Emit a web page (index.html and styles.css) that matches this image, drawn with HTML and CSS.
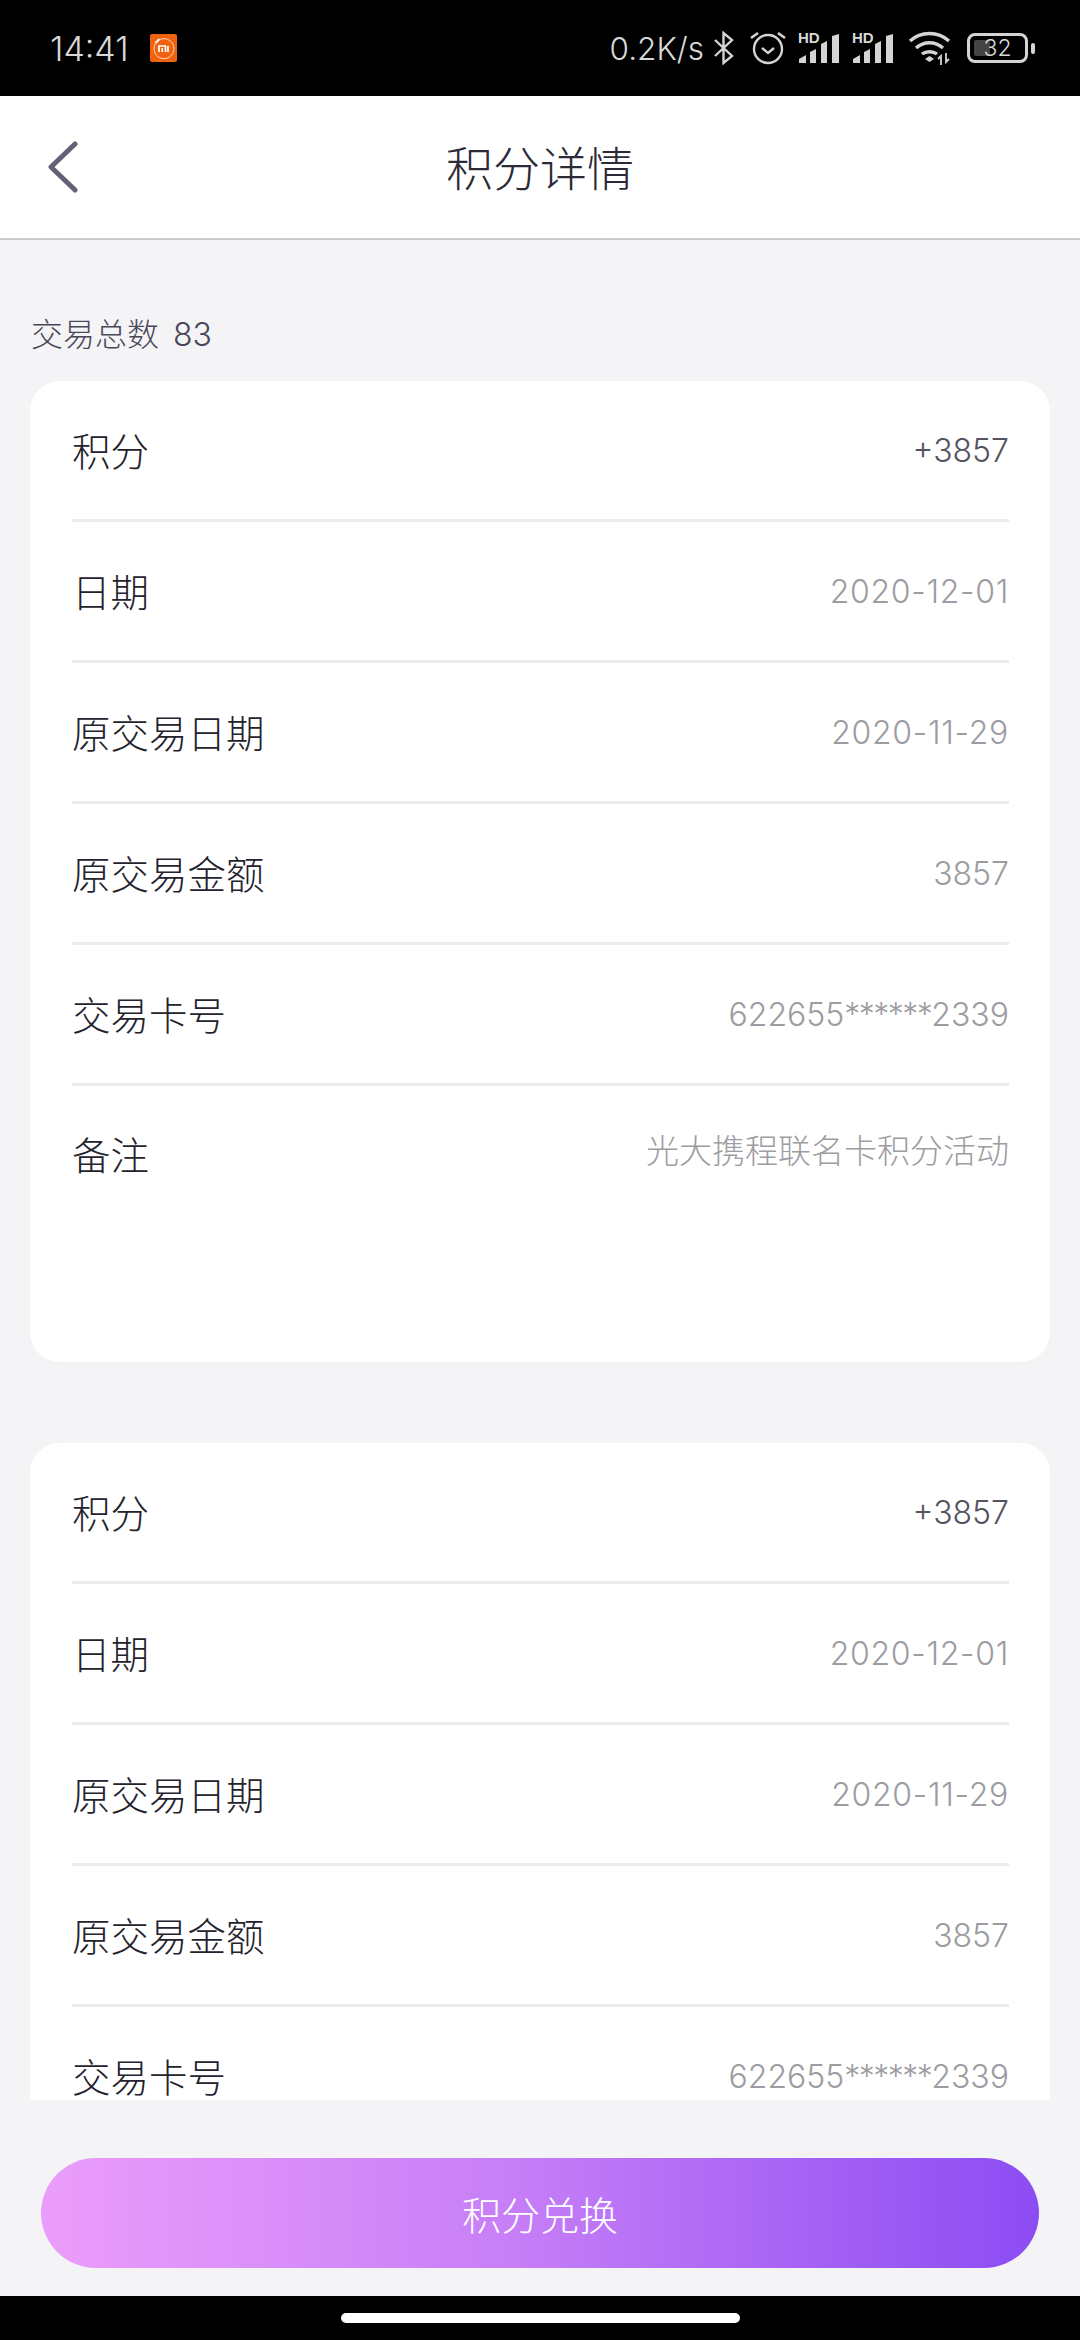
FILE: index.html
```html
<!DOCTYPE html>
<html lang="zh-CN">

<head>
    <meta charset="UTF-8">
    <meta name="viewport" content="width=device-width, initial-scale=1.0">
    <title>积分详情</title>

    <link rel="stylesheet" href="styles.css">
</head>

<body>

    <div class="statusbar">
        <div class="status-left">
            <span class="time">14:41</span>
            <svg class="mi-icon" width="27" height="28" viewBox="0 0 27 28">
                <rect width="27" height="28" rx="2" fill="#f0620e"/>
                <path d="M7 7.500a10 10 0 1 0 3-2" fill="none" stroke="#ffd9b8" stroke-width="1"/>
                <path d="M5.500 9l4-4" stroke="#fff" stroke-width="2"/>
                <path d="M9 18v-6h6.500v6M12.200 14v4M18 12v6" fill="none" stroke="#fff" stroke-width="1.700"/>
            </svg>
        </div>
        <div class="status-right">
            <span class="speed">0.2K/s</span>
            <svg class="bt" width="22" height="34" viewBox="0 0 22 34">
                <path d="M2 9l17 16-8.500 7V2l8.500 7L2 25" fill="none" stroke="#d4d4d4" stroke-width="2.400"/>
            </svg>
            <svg class="alarm" width="36" height="34" viewBox="0 0 36 34">
                <circle cx="18" cy="18" r="14" fill="none" stroke="#d4d4d4" stroke-width="2.400"/>
                <path d="M12 17l6 5 6-5" fill="none" stroke="#d4d4d4" stroke-width="2.400"/>
                <path d="M1 7l7-5M35 7l-7-5" stroke="#d4d4d4" stroke-width="2.600"/>
            </svg>
            <div class="signal">
                <span class="hd">HD</span>
                <svg width="40" height="29" viewBox="0 0 40 29">
                    <path d="M0 29V25L7 21V29ZM11 29V18L17 15V29ZM22 29V10L28 7V29ZM33 29V2L40 0V29Z" fill="#d4d4d4"/>
                </svg>
            </div>
            <div class="signal">
                <span class="hd">HD</span>
                <svg width="40" height="29" viewBox="0 0 40 29">
                    <path d="M0 29V25L7 21V29ZM11 29V18L17 15V29ZM22 29V10L28 7V29ZM33 29V2L40 0V29Z" fill="#d4d4d4"/>
                </svg>
            </div>
            <svg class="wifi" width="44" height="34" viewBox="0 0 44 34">
                <path d="M2 10C13 0 30 0 41 10M8 17C16 10 27 10 35 17M14 23C18 20 25 20 29 23" fill="none" stroke="#d4d4d4" stroke-width="3.400"/>
                <path d="M17 28l4.500-3 4.500 3-4.500 3Z" fill="#d4d4d4"/>
                <path d="M33 34V25l-3 3M38 22v9l3-3" fill="none" stroke="#d4d4d4" stroke-width="1.800"/>
            </svg>
            <div class="battery">
                <div class="battery-body">
                    <span class="battery-fill"></span>
                    <span class="battery-num">32</span>
                </div>
                <span class="battery-tip"></span>
            </div>
        </div>
    </div>

    <div class="header">
        <svg class="back" width="34" height="52" viewBox="0 0 34 52">
            <path d="M29 3L5 26l24 23" fill="none" stroke="#655f78" stroke-width="5" stroke-linecap="round" stroke-linejoin="round"/>
        </svg>
        <h1 class="title">积分详情</h1>
    </div>

    <div class="content">
        <p class="total">交易总数 83</p>

        <div class="card">
            <div class="row"><span class="name">积分</span><span class="val dark">+3857</span></div>
            <div class="row"><span class="name">日期</span><span class="val date">2020-12-01</span></div>
            <div class="row"><span class="name">原交易日期</span><span class="val date">2020-11-29</span></div>
            <div class="row"><span class="name">原交易金额</span><span class="val">3857</span></div>
            <div class="row"><span class="name">交易卡号</span><span class="val">622655<span class="stars">******</span>2339</span></div>
            <div class="row note"><span class="name">备注</span><span class="val remark">光大携程联名卡积分活动</span></div>
        </div>

        <div class="card">
            <div class="row"><span class="name">积分</span><span class="val dark">+3857</span></div>
            <div class="row"><span class="name">日期</span><span class="val date">2020-12-01</span></div>
            <div class="row"><span class="name">原交易日期</span><span class="val date">2020-11-29</span></div>
            <div class="row"><span class="name">原交易金额</span><span class="val">3857</span></div>
            <div class="row"><span class="name">交易卡号</span><span class="val">622655<span class="stars">******</span>2339</span></div>
        </div>
    </div>

    <div class="footer">
        <button class="exchange">积分兑换</button>
    </div>

    <div class="navbar">
        <span class="home"></span>
    </div>

</body>

</html>
```

FILE: styles.css
```css
* {
    box-sizing: border-box;
}

body {
    width: 1080px;
    height: 2340px;
    margin: 0;
    overflow: hidden;
    display: flex;
    flex-direction: column;
    font-family: "Inter", "Noto Sans CJK SC", sans-serif;
    font-weight: 300;
    background-color: #f4f4f7;
}

/* status bar */
.statusbar {
    height: 96px;
    flex: none;
    display: flex;
    justify-content: space-between;
    align-items: center;
    padding: 0 45px 0 50px;
    color: #d8d8d8;
    background-color: #000;
}

.status-left {
    display: flex;
    align-items: center;
    gap: 21px;
}

.time {
    font-size: 34px;
}

.status-right {
    display: flex;
    align-items: center;
}

.speed {
    font-size: 31.500px;
    margin-right: 9px;
}

.alarm {
    margin-left: 15px;
}

.signal {
    position: relative;
    width: 42px;
    height: 30px;
    margin-left: 11px;
    display: flex;
    align-items: flex-end;
    justify-content: flex-end;
}

.signal + .signal {
    margin-left: 12px;
}

.hd {
    position: absolute;
    left: 1px;
    top: -1px;
    font-family: "Liberation Sans", sans-serif;
    font-size: 15px;
    font-weight: 700;
    line-height: 11px;
}

.wifi {
    margin-left: 15px;
}

.battery {
    display: flex;
    align-items: center;
    gap: 3px;
    margin-left: 15px;
}

.battery-body {
    position: relative;
    width: 61px;
    height: 30px;
    border: 3px solid #d4d4d4;
    border-radius: 8px;
    display: flex;
    align-items: center;
    justify-content: center;
}

.battery-fill {
    position: absolute;
    left: 4px;
    top: 4px;
    bottom: 4px;
    width: 16px;
    background-color: #444;
    border-radius: 2px;
}

.battery-num {
    position: relative;
    font-size: 23px;
    line-height: 24px;
}

.battery-tip {
    width: 4px;
    height: 11px;
    background-color: #d4d4d4;
    border-radius: 2px;
}

/* header */
.header {
    position: relative;
    height: 144px;
    flex: none;
    display: flex;
    align-items: center;
    justify-content: center;
    padding-bottom: 3px;
    background-color: #fff;
    border-bottom: 2px solid #c9c9d0;
}

.back {
    position: absolute;
    left: 46px;
    top: 45px;
}

.title {
    margin: 0;
    font-size: 47px;
    font-weight: 300;
    color: #2c2a36;
}

/* list */
.content {
    height: 1860px;
    flex: none;
    overflow: hidden;
    padding: 0 30px;
}

.total {
    margin: 72px 0 0;
    height: 46px;
    line-height: 46px;
    font-size: 32px;
    word-spacing: 5px;
    color: #4a4858;
    padding-left: 1px;
}

.card {
    margin: 23px 0 81px;
    padding: 0 41px 0 42px;
    background-color: #fff;
    border-radius: 30px;
}

.row {
    height: 141px;
    display: flex;
    justify-content: space-between;
    align-items: center;
    padding-bottom: 3px;
    border-bottom: 3px solid #ececef;
}

.row.note {
    height: 276px;
    align-items: flex-start;
    padding-top: 39px;
    border-bottom: none;
}

.name {
    font-size: 38.500px;
    color: #24222c;
}

.val {
    margin-top: 3px;
    font-size: 32px;
    color: #9c9ca2;
}

.val.dark {
    color: #55535f;
}

.val.date {
    letter-spacing: 0.700px;
}

.val.remark {
    margin-top: 0;
    font-size: 33px;
}

.stars {
    letter-spacing: -1.500px;
}

/* bottom button */
.footer {
    flex: 1;
    display: flex;
    align-items: flex-start;
    justify-content: center;
    padding-top: 58px;
}

.exchange {
    width: 998px;
    height: 110px;
    border: none;
    border-radius: 55px;
    font-family: inherit;
    font-size: 39px;
    font-weight: 300;
    color: #fff;
    background: linear-gradient(90deg, #eb9dfb 0%, #c980f7 45%, #8c4cf3 100%);
}

.navbar {
    height: 44px;
    flex: none;
    display: flex;
    justify-content: center;
    padding-top: 17px;
    background-color: #000;
}

.home {
    width: 399px;
    height: 10px;
    background-color: #fff;
    border-radius: 5px;
}
```
